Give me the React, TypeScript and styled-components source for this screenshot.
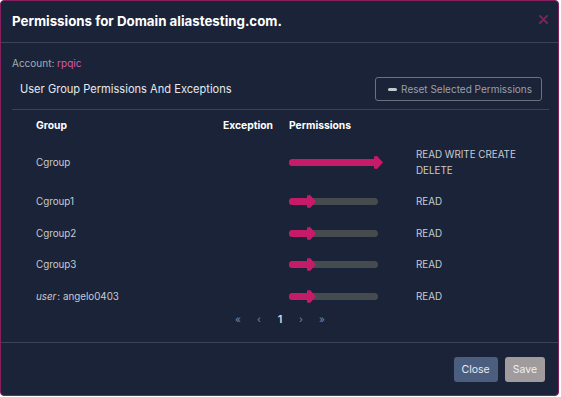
import styled, {createGlobalStyle} from 'styled-components';

type Row = {
  name: string;
  isUser?: boolean;
  level: number;
  perms: string;
};

const rows: Row[] = [
  {name: 'Cgroup', level: 4, perms: 'READ WRITE CREATE DELETE'},
  {name: 'Cgroup1', level: 1, perms: 'READ'},
  {name: 'Cgroup2', level: 1, perms: 'READ'},
  {name: 'Cgroup3', level: 1, perms: 'READ'},
  {name: 'angelo0403', isUser: true, level: 1, perms: 'READ'},
];

const TRACK_WIDTH = 89;
const MAX_LEVEL = 4;

const PermissionSlider: React.FC<{level: number}> = ({level}) => {
  const pos = (level / MAX_LEVEL) * TRACK_WIDTH;
  return (
    <Track>
      <Fill style={{width: pos}} />
      <Thumb style={{left: pos - 4}} width="9" height="13" viewBox="0 0 9 13">
        <polygon points="0,0.5 3,0 9,6.5 3,13 0,12.5" fill="#c61b69" />
      </Thumb>
    </Track>
  );
};

const App: React.FC = () => {
  return (
    <>
      <GlobalStyle />
      <Modal>
        <Header>
          <Title>Permissions for Domain aliastesting.com.</Title>
          <CloseIcon width="9" height="9" viewBox="0 0 9 9">
            <path d="M1 1L8 8M8 1L1 8" stroke="#7c2359" strokeWidth="2" strokeLinecap="round" />
          </CloseIcon>
        </Header>
        <Body>
          <Account>
            Account: <AccountName>rpqic</AccountName>
          </Account>
          <SubHeader>
            <SubTitle>User Group Permissions And Exceptions</SubTitle>
            <ResetButton>
              <MinusIcon />
              Reset Selected Permissions
            </ResetButton>
          </SubHeader>
          <Table>
            <HeadCell>Group</HeadCell>
            <HeadCell>Exception</HeadCell>
            <HeadCell>Permissions</HeadCell>
            <HeadCell />
            {rows.map(row => (
              <RowGroup key={row.name}>
                <Cell>
                  {row.isUser ? (
                    <>
                      <em>user</em>: {row.name}
                    </>
                  ) : (
                    row.name
                  )}
                </Cell>
                <Cell />
                <Cell>
                  <PermissionSlider level={row.level} />
                </Cell>
                <PermText>{row.perms}</PermText>
              </RowGroup>
            ))}
          </Table>
          <Pager>
            <PageLink>«</PageLink>
            <PageLink>‹</PageLink>
            <PageLink $active>1</PageLink>
            <PageLink>›</PageLink>
            <PageLink>»</PageLink>
          </Pager>
        </Body>
        <Footer>
          <Button $variant="close">Close</Button>
          <Button $variant="save">Save</Button>
        </Footer>
      </Modal>
    </>
  );
};

export default App;

// Styled Components

const GlobalStyle = createGlobalStyle`
  body {
    margin: 0;
    background: #ffffff;
    font-family: Inter, "Noto Sans", sans-serif;
  }
`;

const Modal = styled.div`
  box-sizing: border-box;
  width: 559px;
  height: 396px;
  display: flex;
  flex-direction: column;
  background: #1a2338;
  border: 1px solid #85205d;
  border-radius: 4px;
  overflow: hidden;
`;

const Header = styled.div`
  height: 42px;
  display: flex;
  align-items: center;
  justify-content: space-between;
  padding: 0 10px 2px 11px;
  box-sizing: border-box;
  border-bottom: 1px solid #3b4457;
`;

const Title = styled.h1`
  margin: 0;
  font-size: 13.3px;
  font-weight: 700;
  color: #ffffff;
`;

const CloseIcon = styled.svg`
  display: block;
  margin-bottom: 2px;
`;

const Body = styled.div`
  flex: 1;
  padding: 13px 9px 0 11px;
`;

const Account = styled.div`
  font-size: 10px;
  line-height: 14px;
  color: #a7abb4;
`;

const AccountName = styled.span`
  color: #d35cb6;
`;

const SubHeader = styled.div`
  display: flex;
  align-items: center;
  justify-content: space-between;
  margin-top: 7px;
  padding: 0 7px 8px 8px;
  border-bottom: 1px solid #3b4457;
`;

const SubTitle = styled.div`
  font-size: 11.1px;
  color: #e6e8ec;
`;

const ResetButton = styled.button`
  display: flex;
  align-items: center;
  gap: 4px;
  height: 24px;
  box-sizing: border-box;
  padding: 0 9px 0 12px;
  background: transparent;
  border: 1px solid #6b717d;
  border-radius: 3px;
  font-family: inherit;
  font-size: 10px;
  color: #9aa0aa;
`;

const MinusIcon = styled.span`
  display: block;
  width: 9px;
  height: 3px;
  border-radius: 2px;
  background: #c3c7ce;
`;

const Table = styled.div`
  display: grid;
  grid-template-columns: 187px 66px 127px 112px;
  padding-left: 24px;
`;

const HeadCell = styled.div`
  height: 29px;
  display: flex;
  align-items: center;
  font-size: 10.3px;
  font-weight: 700;
  color: #ffffff;
`;

const RowGroup = styled.div`
  display: contents;
`;

const Cell = styled.div`
  display: flex;
  align-items: center;
  padding: 8px 0;
  font-size: 9.8px;
  line-height: 15.5px;
  color: #c8cbd1;

  em {
    font-style: italic;
    margin-right: 1px;
  }
`;

const PermText = styled(Cell)`
  font-size: 9.8px;
`;

const Track = styled.div`
  position: relative;
  width: ${TRACK_WIDTH}px;
  height: 7px;
  border-radius: 4px;
  background: #454b4e;
`;

const Fill = styled.div`
  position: absolute;
  left: 0;
  top: 0;
  height: 7px;
  border-radius: 4px 0 0 4px;
  background: #c61b69;
`;

const Thumb = styled.svg`
  position: absolute;
  top: -3px;
`;

const Pager = styled.div`
  display: flex;
  justify-content: center;
  align-items: center;
  height: 14px;
  padding-right: 1px;
`;

const PageLink = styled.span<{$active?: boolean}>`
  width: 21px;
  text-align: center;
  font-size: ${p => (p.$active ? '11px' : '10px')};
  font-weight: ${p => (p.$active ? 600 : 400)};
  color: ${p => (p.$active ? '#d6d9de' : '#7e8592')};
`;

const Footer = styled.div`
  height: 53px;
  box-sizing: border-box;
  display: flex;
  justify-content: flex-end;
  align-items: center;
  gap: 7px;
  padding: 0 13px 0 0;
  border-top: 1px solid #3b4457;
`;

const Button = styled.button<{$variant: 'close' | 'save'}>`
  height: 25px;
  padding: 0 8px;
  border: none;
  border-radius: 3px;
  font-family: inherit;
  font-size: 10.5px;
  color: ${p => (p.$variant === 'close' ? '#e8ebf0' : '#eeeeee')};
  background: ${p => (p.$variant === 'close' ? '#4b5e80' : '#a09b9c')};
`;
